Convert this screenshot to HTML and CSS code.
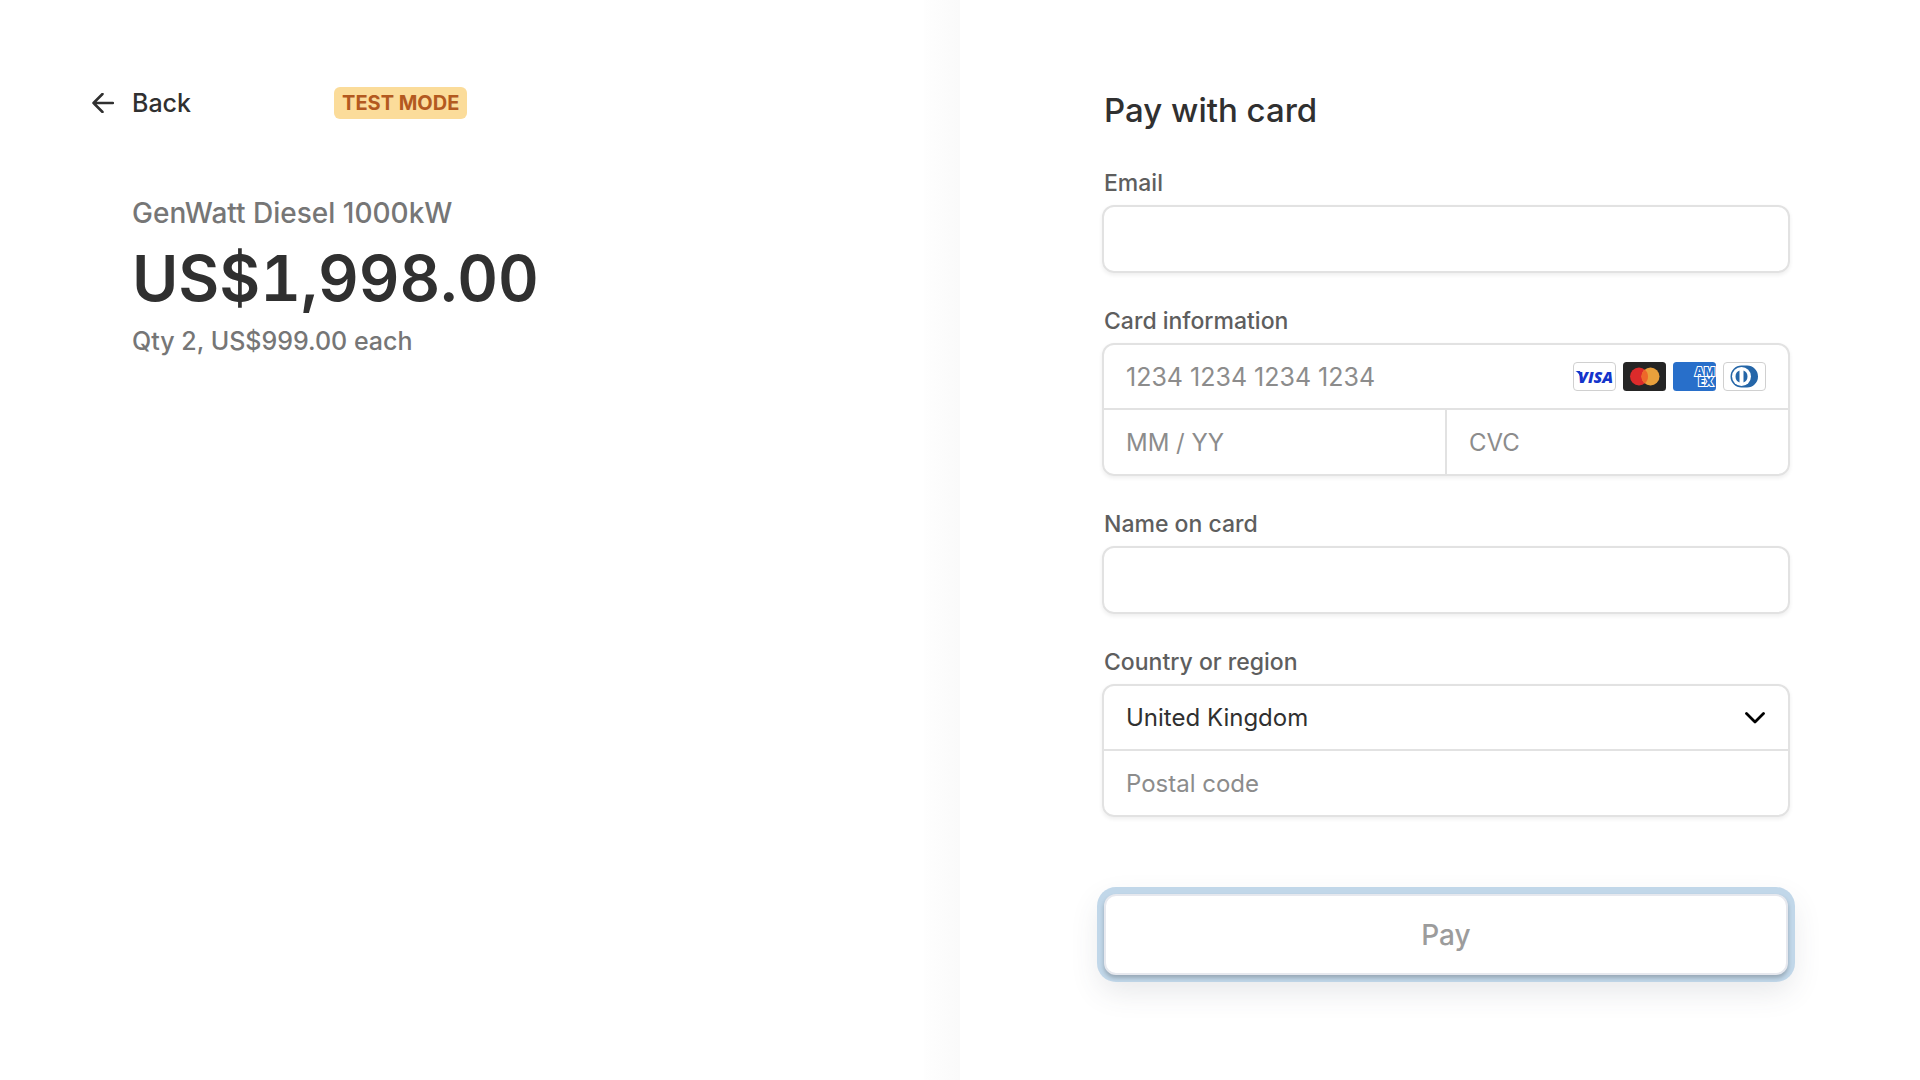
FILE: index.html
```html
<!DOCTYPE html>
<html lang="en">
<head>
<meta charset="utf-8">
<meta name="viewport" content="width=device-width, initial-scale=1">
<title>Checkout</title>
<link rel="stylesheet" href="styles.css">
</head>
<body>
<div class="checkout">
  <section class="summary">
    <header class="topbar">
      <a class="back" href="#">
        <svg class="back-icon" viewBox="0 0 22 20" aria-hidden="true"><path d="M10.500 1 1.500 10l9 9M1.500 10H21" fill="none" stroke="currentColor" stroke-width="2.500" stroke-linecap="round" stroke-linejoin="round"/></svg>
        <span>Back</span>
      </a>
      <span class="badge">TEST MODE</span>
    </header>
    <div class="order">
      <p class="product">GenWatt Diesel 1000kW</p>
      <p class="price">US$1,998.00</p>
      <p class="quantity">Qty 2, US$999.00 each</p>
    </div>
  </section>

  <main class="payment">
    <form class="form">
      <h1 class="title">Pay with card</h1>

      <div class="field">
        <label class="label" for="email">Email</label>
        <div class="box"><input class="input" id="email" type="email"></div>
      </div>

      <div class="field">
        <label class="label" for="number">Card information</label>
        <div class="box">
          <div class="row">
            <input class="input input-top input-number" id="number" type="text" placeholder="1234 1234 1234 1234">
            <div class="brands">
              <svg class="brand" viewBox="0 0 43 29" role="img" aria-label="Visa"><rect x=".5" y=".5" width="42" height="28" rx="3.500" fill="#fff" stroke="#d0d0d0"/><path d="M2.500 9h4.500l3 7-1.500 3.500C7.500 14 6 11 2.500 9Z" fill="#1434cb"/><text class="visa" x="5" y="20.500">VISA</text></svg>
              <svg class="brand" viewBox="0 0 43 29" role="img" aria-label="Mastercard"><rect width="43" height="29" rx="3.500" fill="#252525"/><circle cx="16" cy="14.500" r="9" fill="#dc2b2b"/><circle cx="27.500" cy="14.500" r="9" fill="#e9a03c"/><path d="M21.750 7.580a9 9 0 0 1 0 13.840 9 9 0 0 1 0-13.840Z" fill="#ee682a"/></svg>
              <svg class="brand" viewBox="0 0 43 29" role="img" aria-label="American Express"><rect width="43" height="29" rx="3.500" fill="#286fca"/><text class="amex" x="22" y="14">AM</text><text class="amex" x="25" y="24">EX</text></svg>
              <svg class="brand" viewBox="0 0 43 29" role="img" aria-label="Diners Club"><rect x=".5" y=".5" width="42" height="28" rx="3.500" fill="#fff" stroke="#d0d0d0"/><path d="M18.500 3.500H24a11 11 0 0 1 0 22h-5.500a11 11 0 0 1 0-22Z" fill="#2566a8"/><circle cx="18.500" cy="14.500" r="9.500" fill="#fff"/><path d="M16.500 8.500v12a6.500 6.500 0 0 1 0-12ZM20.500 8.500v12a6.500 6.500 0 0 0 0-12Z" fill="#2566a8"/></svg>
            </div>
          </div>
          <div class="row row-split">
            <input class="input" type="text" placeholder="MM / YY" aria-label="Expiration">
            <input class="input" type="text" placeholder="CVC" aria-label="CVC">
          </div>
        </div>
      </div>

      <div class="field">
        <label class="label" for="name">Name on card</label>
        <div class="box"><input class="input" id="name" type="text"></div>
      </div>

      <div class="field">
        <label class="label" for="country">Country or region</label>
        <div class="box">
          <div class="row">
            <select class="input input-top select" id="country"><option>United Kingdom</option></select>
            <svg class="chevron" viewBox="0 0 20 12" aria-hidden="true"><path d="m1.500 1.500 8.500 8.500 8.500-8.500" fill="none" stroke="#000" stroke-width="2.800" stroke-linecap="round" stroke-linejoin="round"/></svg>
          </div>
          <div class="row">
            <input class="input" type="text" placeholder="Postal code" aria-label="Postal code">
          </div>
        </div>
      </div>

      <button class="pay" type="button">Pay</button>
    </form>
  </main>
</div>
</body>
</html>
```
FILE: styles.css
```css
* {
  box-sizing: border-box;
}

body {
  margin: 0;
  background: #fff;
  color: #303030;
  font-family: Inter, "Liberation Sans", sans-serif;
}

.checkout {
  display: grid;
  grid-template-columns: 1fr 1fr;
  min-height: 100vh;
}

.summary {
  padding: 87px 92px;
  background: linear-gradient(to left, #fafafa, #fefefe 36px, #fff 36px);
}

.topbar {
  display: flex;
  align-items: center;
  gap: 143px;
}

.back {
  display: flex;
  align-items: center;
  gap: 18px;
  color: #303030;
  font-size: 25px;
  font-weight: 500;
  line-height: 32px;
  text-decoration: none;
}

.back-icon {
  width: 22px;
  height: 20px;
}

.badge {
  padding: 0 8px;
  border-radius: 6px;
  background: #fbdc9a;
  color: #b3591f;
  font-size: 20px;
  font-weight: 700;
  line-height: 32px;
}

.order {
  padding: 76px 40px 0;
}

.product,
.price,
.quantity {
  margin: 0;
}

.product {
  color: #767676;
  font-size: 28px;
  font-weight: 500;
  line-height: 36px;
}

.price {
  font-size: 63px;
  font-weight: 600;
  line-height: 94px;
  font-variant-numeric: tabular-nums;
}

.quantity {
  color: #767676;
  font-size: 25px;
  font-weight: 500;
  line-height: 32px;
}

.payment {
  padding: 88px 130px 64px 142px;
}

.form {
  display: flex;
  flex-direction: column;
  gap: 34px;
}

.title {
  margin: 0 2px 3px;
  font-size: 33px;
  font-weight: 500;
  line-height: 44px;
}

.field {
  display: flex;
  flex-direction: column;
  gap: 8px;
}

.label {
  padding-left: 2px;
  color: #5e5e5e;
  font-size: 23px;
  font-weight: 500;
  line-height: 28px;
}

.box {
  border: 2px solid #e2e2e2;
  border-radius: 12px;
  overflow: hidden;
  box-shadow: 0 2px 4px rgba(0, 0, 0, 0.07);
}

.row {
  display: flex;
  align-items: center;
}

.row + .row {
  border-top: 2px solid #e2e2e2;
}

.row-split .input + .input {
  border-left: 2px solid #e2e2e2;
}

.input {
  display: block;
  flex: 1;
  width: 100%;
  min-width: 0;
  height: 64px;
  padding: 0 22px;
  border: 0;
  outline: 0;
  background: transparent;
  color: #303030;
  font-family: inherit;
  font-size: 24px;
}

.input-top {
  height: 63px;
}

.input-number {
  font-size: 25px;
}

.input::placeholder {
  color: #8c8c8c;
  opacity: 1;
}

.select {
  appearance: none;
}

.brands {
  display: flex;
  gap: 7px;
  padding-right: 22px;
}

.brand {
  width: 43px;
  height: 29px;
}

.visa {
  fill: #1434cb;
  font: italic 800 16px "Open Sans", sans-serif;
}

.amex {
  fill: #286fca;
  stroke: #fff;
  stroke-width: 2px;
  paint-order: stroke;
  font: 800 12px "Open Sans", sans-serif;
}

.chevron {
  width: 20px;
  height: 12px;
  margin-right: 23px;
}

.pay {
  height: 81px;
  margin: 43px 2px 0;
  border: 2px solid #e6e8ee;
  border-radius: 12px;
  background: #fff;
  color: #9c9c9c;
  font-family: inherit;
  font-size: 28px;
  font-weight: 500;
  box-shadow:
    0 3px 4px rgba(0, 0, 0, 0.22),
    0 0 0 7px #c1d7e9,
    0 12px 30px 4px rgba(60, 66, 87, 0.13);
}
```
